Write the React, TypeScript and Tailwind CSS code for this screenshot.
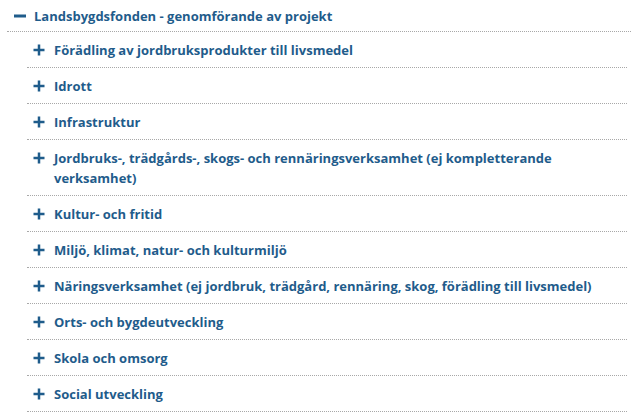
import React from "react";

const items: string[] = [
  "Förädling av jordbruksprodukter till livsmedel",
  "Idrott",
  "Infrastruktur",
  "Jordbruks-, trädgårds-, skogs- och rennäringsverksamhet (ej kompletterande verksamhet)",
  "Kultur- och fritid",
  "Miljö, klimat, natur- och kulturmiljö",
  "Näringsverksamhet (ej jordbruk, trädgård, rennäring, skog, förädling till livsmedel)",
  "Orts- och bygdeutveckling",
  "Skola och omsorg",
  "Social utveckling",
];

function Minus() {
  return (
    <svg width="12" height="12" viewBox="0 0 12 12" className="shrink-0 mt-[4px]">
      <rect x="0" y="4.5" width="12" height="3" fill="#1f5c8b" />
    </svg>
  );
}

function Plus() {
  return (
    <svg width="12" height="12" viewBox="0 0 12 12" className="shrink-0 mt-[4px]">
      <rect x="0.5" y="4.75" width="11" height="2.5" fill="#1f5c8b" />
      <rect x="4.75" y="0.5" width="2.5" height="11" fill="#1f5c8b" />
    </svg>
  );
}

export default function App() {
  return (
    <div
      className="w-[635px] h-[415px] bg-white overflow-hidden text-[13px] leading-5 font-bold text-[#1f5c8b]"
      style={{ fontFamily: '"Open Sans", "Liberation Sans", sans-serif' }}
    >
      {/* top level */}
      <div className="ml-[7px] w-[624px]">
        <div className="flex gap-[8px] pl-[7px] pt-[6px] pb-[5px] border-b border-dotted border-[#a8a8a8]">
          <Minus />
          <span>Landsbygdsfonden - genomförande av projekt</span>
        </div>

        {/* children */}
        <div className="ml-[20px] w-[600px]">
          {items.map((t) => (
            <div
              key={t}
              className="flex gap-[9px] pl-[6px] pt-2 pb-[7px] border-b border-dotted border-[#a8a8a8]"
            >
              <Plus />
              <span>{t}</span>
            </div>
          ))}
        </div>
      </div>
    </div>
  );
}
